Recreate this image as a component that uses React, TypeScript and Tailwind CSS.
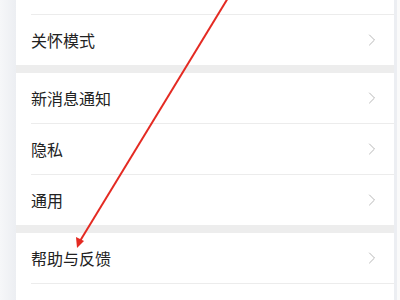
import { ChevronRight } from "lucide-react";

type Row = { label: string; divider?: boolean };

const groups: Row[][] = [
  [{ label: "关怀模式" }],
  [{ label: "新消息通知", divider: true }, { label: "隐私", divider: true }, { label: "通用" }],
  [{ label: "帮助与反馈", divider: true }],
];

function SettingRow({ label, divider }: Row) {
  return (
    <div className="flex flex-col">
      <div className="flex h-[50px] items-center justify-between pl-[15px] pr-[12px]">
        <span className="text-[16px] leading-none text-[#222222]">{label}</span>
        <ChevronRight className="h-[20px] w-[20px] text-[#b8b8b8]" strokeWidth={1.2} />
      </div>
      {divider && <div className="ml-[15px] h-px bg-[#ececec]" />}
    </div>
  );
}

export default function App() {
  return (
    <div
      className="relative flex h-[300px] w-[400px] overflow-hidden bg-[#f1f2f5]"
      style={{ fontFamily: '"Noto Sans CJK SC", "Noto Sans", sans-serif' }}
    >
      <div className="w-[16px] shrink-0 bg-gradient-to-r from-[#f6f7f9] to-[#eceef2]" />
      <div className="flex w-[378px] shrink-0 flex-col bg-white">
        <div className="h-[14px]" />
        <div className="ml-[15px] h-px bg-[#ececec]" />
        {groups.map((group, i) => (
          <div key={i} className="flex flex-col">
            {i > 0 && <div className="h-[8px] bg-[#ededed]" />}
            {group.map((row) => (
              <SettingRow key={row.label} {...row} />
            ))}
          </div>
        ))}
      </div>
      <div className="w-[3px] shrink-0 bg-[#eceef2]" />
      <div className="flex-1 bg-[#fafafa]" />

      {/* annotation arrow */}
      <svg className="pointer-events-none absolute left-0 top-0" width="400" height="300">
        <line x1="228" y1="-2" x2="80" y2="241" stroke="#e42a22" strokeWidth="2" />
        <polygon points="77,248 76,237 84,241" fill="#e42a22" />
      </svg>
    </div>
  );
}
